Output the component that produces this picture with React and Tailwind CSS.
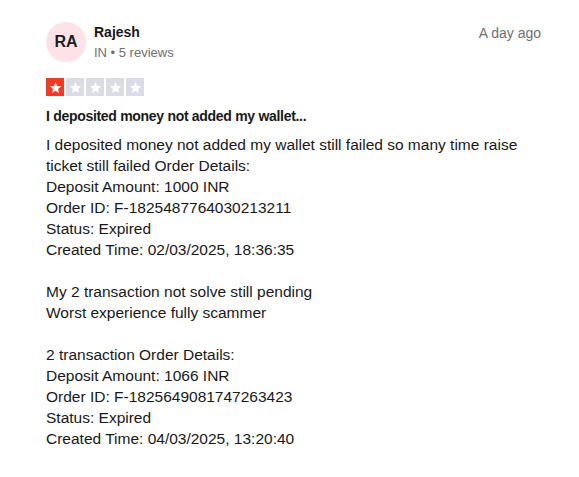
export default function App() {
  const stars = [1, 2, 3, 4, 5];
  return (
    <div className="w-[579px] h-[477px] bg-white px-[46px] pt-[22px] text-[#191919]" style={{ fontFamily: '"Liberation Sans", Arial, sans-serif' }}>
      <div className="flex items-start">
        <div className="w-10 h-10 rounded-full bg-[#fde3e8] flex items-center justify-center text-[16px] font-bold text-[#1c1c1c] shrink-0">
          RA
        </div>
        <div className="ml-2 flex-1">
          <div className="text-[14px] font-bold leading-[18px] mt-[1px]">Rajesh</div>
          <div className="text-[13px] text-[#6f6f6f] leading-[18px] mt-[3px]">IN • 5 reviews</div>
        </div>
        <div className="text-[14px] text-[#6f6f6f] mt-[1px] mr-[-8px]">A day ago</div>
      </div>

      <div className="flex gap-[2px] mt-[16px]">
        {stars.map((s) => (
          <div key={s} className={`w-[18px] h-[18px] flex items-center justify-center ${s === 1 ? "bg-[#ff3722]" : "bg-[#dcdce6]"}`}>
            <svg width="13" height="13" viewBox="0 0 24 24">
              <path d="M12 2l2.9 7.1 7.6.6-5.8 5 1.8 7.4L12 18.2 5.5 22.1l1.8-7.4-5.8-5 7.6-.6z" fill="#ffffff" />
            </svg>
          </div>
        ))}
      </div>

      <div className="text-[14px] font-bold mt-[10px] leading-[20px] tracking-[-0.3px]">I deposited money not added my wallet...</div>

      <div className="text-[15.5px] leading-[21px] mt-[8px] w-[500px] whitespace-pre-line">
        {`I deposited money not added my wallet still failed so many time raise ticket still failed Order Details:
Deposit Amount: 1000 INR
Order ID: F-1825487764030213211
Status: Expired
Created Time: 02/03/2025, 18:36:35

My 2 transaction not solve still pending
Worst experience fully scammer

2 transaction Order Details:
Deposit Amount: 1066 INR
Order ID: F-1825649081747263423
Status: Expired
Created Time: 04/03/2025, 13:20:40`}
      </div>
    </div>
  );
}
